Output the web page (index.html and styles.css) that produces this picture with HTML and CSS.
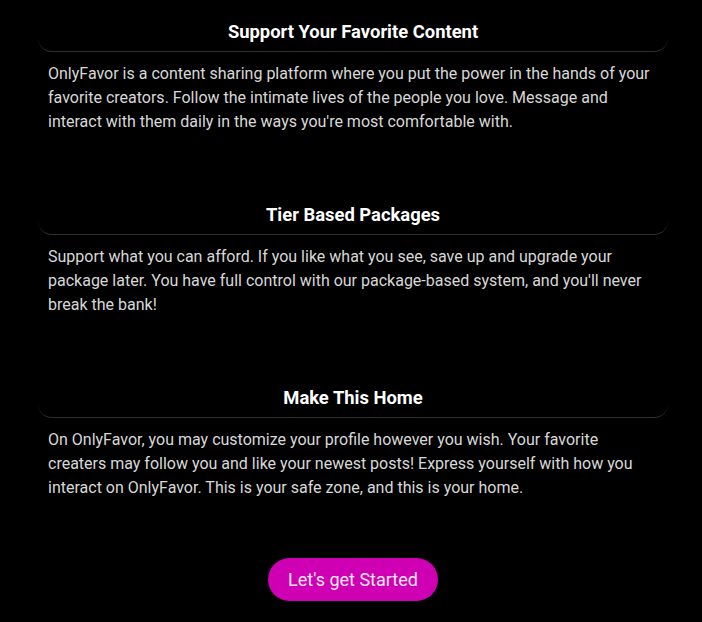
FILE: index.html
```html
<!DOCTYPE html>
<html lang="en">
<head>
  <meta charset="UTF-8" />
  <meta name="viewport" content="width=device-width, initial-scale=1.0"/>
  <title>OnlyFavor</title>
  <link rel="stylesheet" href="styles.css">
</head>
<body>
  <main class="about">
    <section class="feature">
      <div class="feature-head"><h2>Support Your Favorite Content</h2></div>
      <p>OnlyFavor is a content sharing platform where you put the power in the hands of your favorite creators. Follow the intimate lives of the people you love. Message and interact with them daily in the ways you're most comfortable with.</p>
    </section>

    <section class="feature">
      <div class="feature-head"><h2>Tier Based Packages</h2></div>
      <p>Support what you can afford. If you like what you see, save up and upgrade your package later. You have full control with our package-based system, and you'll never break the bank!</p>
    </section>

    <section class="feature">
      <div class="feature-head"><h2>Make This Home</h2></div>
      <p>On OnlyFavor, you may customize your profile however you wish. Your favorite creaters may follow you and like your newest posts! Express yourself with how you interact on OnlyFavor. This is your safe zone, and this is your home.</p>
    </section>

    <div class="cta">
      <a href="#" class="start-btn">Let's get Started</a>
    </div>
  </main>
</body>
</html>
```

FILE: styles.css
```css
body {
  margin: 0;
  background-color: #000;
  color: #d8d8d8;
  font-family: Roboto, 'Liberation Sans', sans-serif;
}

.about {
  padding: 11px 34px 0 38px;
}

.feature {
  margin-bottom: 60px;
}

.feature-head {
  height: 40px;
  display: flex;
  align-items: center;
  justify-content: center;
  border-bottom: 1px solid #303030;
  border-radius: 0 0 14px 14px;
}

.feature-head h2 {
  margin: 0;
  font-size: 18.4px;
  font-weight: 700;
  color: #fff;
}

.feature p {
  margin: 10px 0 0;
  padding: 0 10px;
  font-size: 16px;
  line-height: 24px;
}

.cta {
  display: flex;
  justify-content: center;
  margin-top: -2px;
}

.start-btn {
  display: inline-flex;
  align-items: center;
  height: 43px;
  padding: 0 20px;
  border-radius: 22px;
  background-color: #cf00b3;
  color: #f8e6f5;
  font-size: 18px;
  text-decoration: none;
}
```
